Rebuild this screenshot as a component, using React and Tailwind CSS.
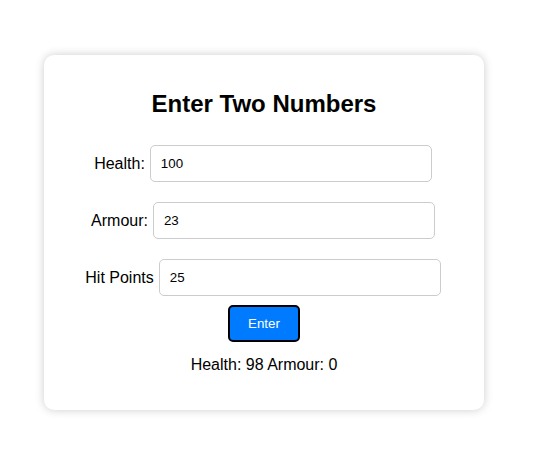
export default function App() {
  const rows = [
    { label: "Health:", value: "100" },
    { label: "Armour:", value: "23" },
    { label: "Hit Points", value: "25" },
  ];
  return (
    <div className="min-h-[464px] w-[543px] bg-white font-['Liberation_Sans',Arial,sans-serif] text-black">
      <div className="pt-[55px] pl-[44px]">
        <div className="w-[440px] rounded-[10px] bg-white pt-[35px] pb-[36px] shadow-[0_0_10px_rgba(0,0,0,0.2)] flex flex-col items-center">
          <h2 className="text-[24px] leading-[28px] font-bold">Enter Two Numbers</h2>
          <div className="mt-[27px] pr-[2px] flex flex-col items-center gap-[20px]">
            {rows.map((r) => (
              <div key={r.label} className="flex items-center gap-[5px]">
                <label className="text-[16px] leading-[18px]">{r.label}</label>
                <input
                  readOnly
                  value={r.value}
                  className="w-[282px] h-[37px] rounded-[5px] border border-[#ccc] px-[10px] text-[13.33px] text-black outline-none"
                />
              </div>
            ))}
          </div>
          <button className="mt-[9px] w-[72px] h-[37px] rounded-[5px] border-2 border-black bg-[#007bff] text-white text-[13.33px]">
            Enter
          </button>
          <p className="mt-[14px] text-[16px] leading-[18px]">Health: 98 Armour: 0</p>
        </div>
      </div>
    </div>
  );
}
